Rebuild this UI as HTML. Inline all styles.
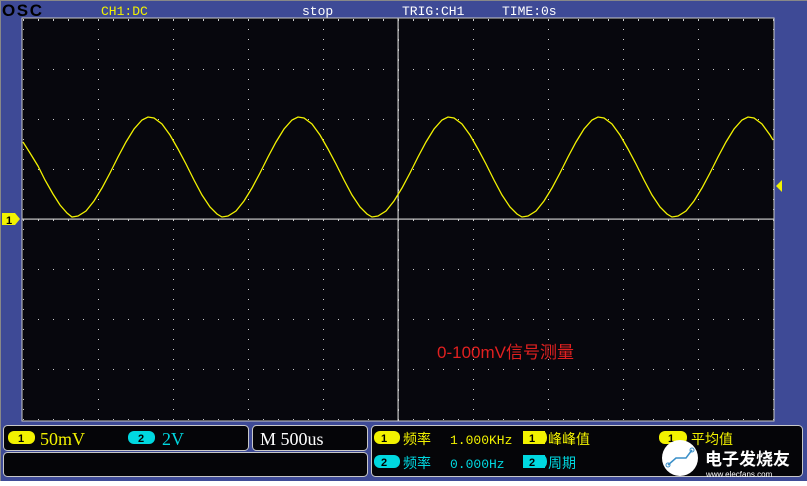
<!DOCTYPE html>
<html><head><meta charset="utf-8"><style>
body{margin:0;width:807px;height:486px;overflow:hidden;background:#fff;font-family:"Liberation Mono","Noto Sans CJK SC",monospace}
</style></head><body>
<svg width="807" height="486" xmlns="http://www.w3.org/2000/svg" style="position:absolute;left:0;top:0">
<defs>
<pattern id="pv" x="23" y="19" width="75" height="10" patternUnits="userSpaceOnUse"><rect width="1" height="1" fill="#cfcfcf"/></pattern>
<pattern id="ph" x="23" y="19" width="15" height="50" patternUnits="userSpaceOnUse"><rect width="1" height="1" fill="#cfcfcf"/></pattern>
<pattern id="pc" x="23" y="0" width="15" height="10" patternUnits="userSpaceOnUse"><rect width="1" height="1" fill="#cfcfcf"/></pattern>
</defs>
<rect width="807" height="481" fill="#3e4a96"/>
<rect width="807" height="1" fill="#888"/>
<rect x="0" y="0" width="1" height="481" fill="#888"/>
<rect x="22" y="18" width="752" height="403" fill="#07070d"/>
<rect x="22" y="18" width="752" height="403" fill="url(#pv)"/>
<rect x="22" y="18" width="752" height="403" fill="url(#ph)"/>
<rect x="22" y="20" width="752" height="3" fill="url(#pc)"/>
<rect x="22" y="415" width="752" height="3" fill="url(#pc)"/>
<rect x="22" y="215" width="752" height="9" fill="url(#pc)"/>
<rect x="393" y="18" width="11" height="403" fill="url(#pc)"/>
<rect x="22" y="18" width="752" height="403" fill="none" stroke="#c8c8c8" stroke-width="1"/>
<rect x="22" y="218.5" width="752" height="1.2" fill="#c8c8c8"/>
<rect x="397.5" y="18" width="1.2" height="403" fill="#c8c8c8"/>
<polyline fill="none" stroke="#f2f200" stroke-width="1.3" points="
23,142 30,153 38,166 45,180 53,194 60,205 67,213 72,217 78,216 86,211 94,201 102,188 110,173 118,157 126,142 134,129 142,120 148,117 154,118 162,124 170,135 178,149 186,164 194,180 202,195 210,207 217,214 222,217 228,216 236,211 244,201 252,188 260,173 268,157 276,142 284,129 292,120 298,117 304,118 312,124 320,135 328,149 336,164 344,180 352,195 360,207 367,214 372,217 378,216 386,211 394,201 402,188 410,173 418,157 426,142 434,129 442,120 448,117 454,118 462,124 470,135 478,149 486,164 494,180 502,195 510,207 517,214 522,217 528,216 536,211 544,201 552,188 560,173 568,157 576,142 584,129 592,120 598,117 604,118 612,124 620,135 628,149 636,164 644,180 652,195 660,207 667,214 672,217 678,216 686,211 694,201 702,188 710,173 718,157 726,142 734,129 742,120 748,117 754,118 762,124 770,135 773,140"/>
<polygon points="2,213 15,213 20,219 15,225 2,225" fill="#f2f200"/>
<text x="6" y="224" font-family="Liberation Sans" font-weight="bold" font-size="11" fill="#000">1</text>
<polygon points="776,186 782,180 782,192" fill="#f2f200"/>
<text x="2" y="16" font-family="Liberation Sans" font-weight="bold" font-size="17" fill="#000" textLength="40">OSC</text>
<text x="101" y="15" font-size="13" fill="#f2f200">CH1:DC</text>
<text x="302" y="15" font-size="13" fill="#fff">stop</text>
<text x="402" y="15" font-size="13" fill="#fff">TRIG:CH1</text>
<text x="502" y="15" font-size="13" fill="#fff">TIME:0s</text>
<text x="437" y="358" font-family="Liberation Sans,Noto Sans CJK SC,sans-serif" font-size="17" fill="#e02020">0-100mV信号测量</text>
<g fill="#050508" stroke="#c8c8c8" stroke-width="1">
<rect x="3.5" y="425.5" width="245" height="25" rx="4"/>
<rect x="252.5" y="425.5" width="115" height="25" rx="4"/>
<rect x="3.5" y="452.5" width="364" height="24" rx="4"/>
<rect x="371.5" y="425.5" width="431" height="51" rx="4"/>
</g>
<rect x="0" y="481" width="807" height="5" fill="#fff"/>
<rect x="8" y="431" width="27" height="13" rx="6" fill="#f2f200"/>
<text x="18" y="442" font-family="Liberation Sans" font-weight="bold" font-size="11" fill="#000">1</text>
<text x="40" y="445" font-family="Liberation Serif" font-size="18" fill="#f2f200">50mV</text>
<rect x="128" y="431" width="27" height="13" rx="6" fill="#00d8e0"/>
<text x="138" y="442" font-family="Liberation Sans" font-weight="bold" font-size="11" fill="#000">2</text>
<text x="162" y="445" font-family="Liberation Serif" font-size="18" fill="#00d8e0">2V</text>
<text x="260" y="445" font-family="Liberation Serif" font-size="18" fill="#fff">M 500us</text>
<rect x="374" y="431" width="26" height="13" rx="6" fill="#f2f200"/>
<text x="381" y="442" font-family="Liberation Sans" font-weight="bold" font-size="11" fill="#000">1</text>
<text x="403" y="444" font-family="Noto Sans CJK SC,sans-serif" font-size="14" fill="#f2f200">频率</text>
<text x="450" y="444" font-size="13" fill="#f2f200">1.000KHz</text>
<rect x="523" y="431" width="22" height="13" fill="#f2f200"/><rect x="538" y="431" width="9" height="13" rx="6" fill="#f2f200"/>
<text x="529" y="442" font-family="Liberation Sans" font-weight="bold" font-size="11" fill="#000">1</text>
<text x="548" y="444" font-family="Noto Sans CJK SC,sans-serif" font-size="14" fill="#f2f200">峰峰值</text>
<rect x="659" y="431" width="28" height="13" rx="6" fill="#f2f200"/>
<text x="668" y="442" font-family="Liberation Sans" font-weight="bold" font-size="11" fill="#000">1</text>
<text x="691" y="444" font-family="Noto Sans CJK SC,sans-serif" font-size="14" fill="#f2f200">平均值</text>
<rect x="374" y="455" width="26" height="13" rx="6" fill="#00d8e0"/>
<text x="381" y="466" font-family="Liberation Sans" font-weight="bold" font-size="11" fill="#000">2</text>
<text x="403" y="468" font-family="Noto Sans CJK SC,sans-serif" font-size="14" fill="#00d8e0">频率</text>
<text x="450" y="468" font-size="13" fill="#00d8e0">0.000Hz</text>
<rect x="523" y="455" width="22" height="13" fill="#00d8e0"/><rect x="538" y="455" width="9" height="13" rx="6" fill="#00d8e0"/>
<text x="529" y="466" font-family="Liberation Sans" font-weight="bold" font-size="11" fill="#000">2</text>
<text x="548" y="468" font-family="Noto Sans CJK SC,sans-serif" font-size="14" fill="#00d8e0">周期</text>
<circle cx="680" cy="458" r="18" fill="#fff"/>
<path d="M668 465 L676 458 L686 458 L692 450" stroke="#3a8fc8" stroke-width="1.5" fill="none"/>
<circle cx="668" cy="465" r="2" fill="none" stroke="#3a8fc8"/>
<circle cx="692" cy="450" r="2" fill="none" stroke="#3a8fc8"/>
<text x="705" y="465" font-family="Noto Sans CJK SC,sans-serif" font-weight="bold" font-size="17" fill="#fff">电子发烧友</text>
<text x="706" y="477" font-family="Liberation Sans" font-size="8" fill="#fff">www.elecfans.com</text>
</svg>
</body></html>
